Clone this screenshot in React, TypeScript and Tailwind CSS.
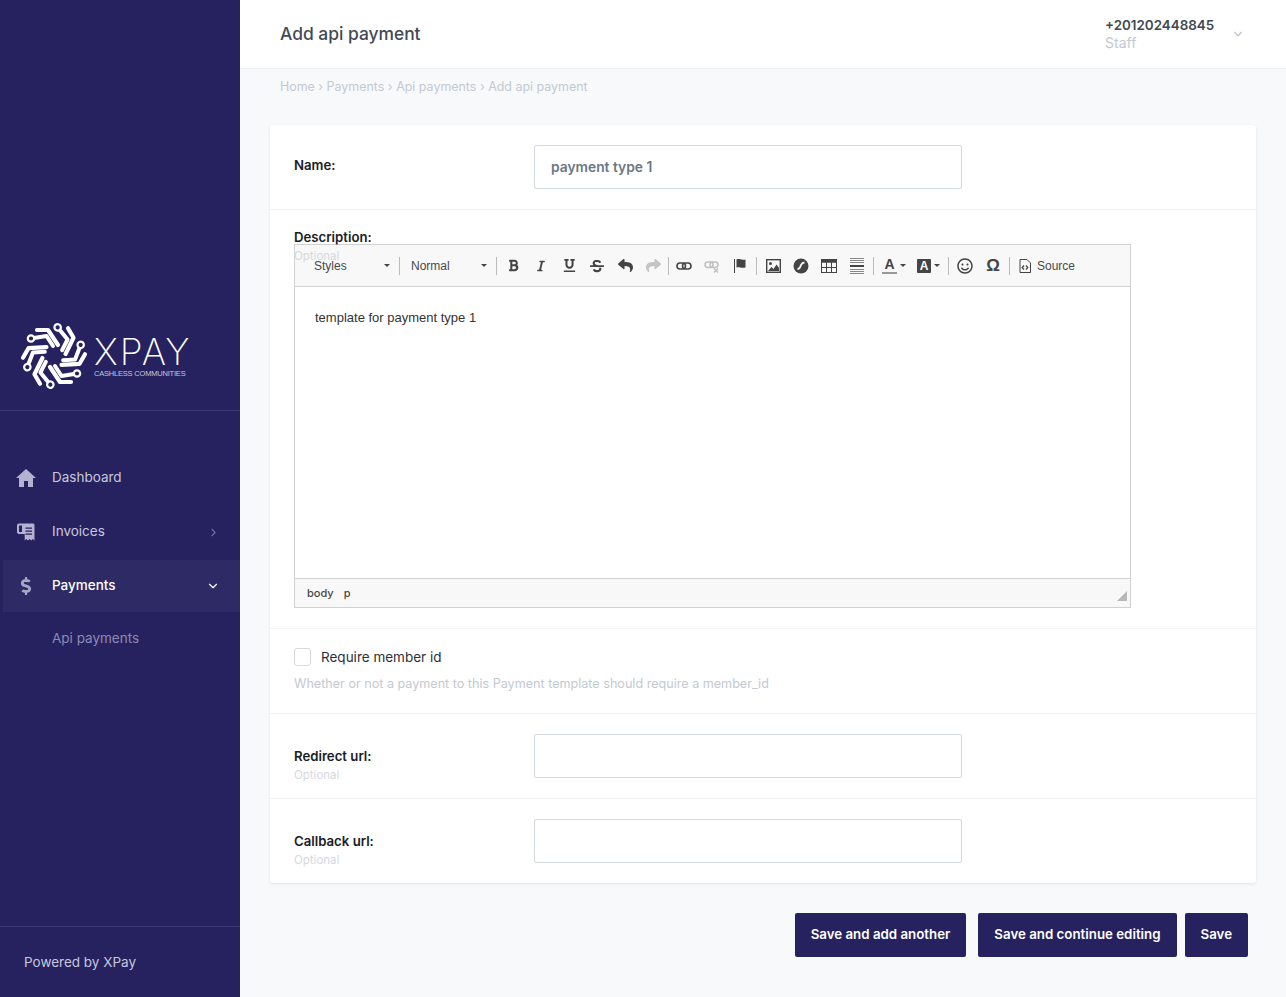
import React, {ReactNode} from "react"
import {
    FaBold,
    FaItalic,
    FaUnderline,
    FaStrikethrough,
    FaReply,
    FaShare,
    FaRegSmile,
    FaDollarSign,
} from "react-icons/fa"
import {ChevronDown, ChevronRight} from "lucide-react"

const APP_FONT = "font-['Inter','Noto_Sans',sans-serif]"

function LogoMark() {
    const arms = [0, 60, 120, 180, 240, 300]
    return (
        <svg width="70" height="70" viewBox="-35 -35 70 70" fill="none" stroke="#ffffff" className="shrink-0">
            {arms.map((angle) => (
                <g key={angle} transform={`rotate(${angle})`}>
                    <path d="M-17 -26 L-6 -26 L4 -11" strokeWidth="4.2" strokeLinecap="round" strokeLinejoin="round"/>
                    <path d="M-20 -18 L-7.500 -20 L-1 -10" strokeWidth="4" strokeLinecap="round" strokeLinejoin="round"/>
                    <circle cx="-23" cy="-17.500" r="3.200" strokeWidth="2.200" fill="#26215f"/>
                </g>
            ))}
        </svg>
    )
}

function HomeIcon() {
    return (
        <svg width="20" height="18" viewBox="0 0 20 18" fill="currentColor">
            <path d="M10 0L20 9h-3v9h-5v-6H8v6H3V9H0z"/>
        </svg>
    )
}

function InvoiceIcon() {
    return (
        <svg width="20" height="20" viewBox="0 0 20 20" fill="currentColor">
            <path d="M1 3.500C1 2.400 1.900 1.500 3 1.500h14c.9 0 1.500.7 1.500 1.500v15.500l-1.700-1.400-1.600 1.400-1.600-1.400-1.600 1.400-1.600-1.400-1.700 1.400V12H3c-1.100 0-2-.9-2-2V3.500zm2 0V10h3V3.500H3zm6.500 2v1.300h6.500V5.500H9.500zm0 3v1.300h6.500V8.500H9.500zm0 3v1.300h6.500v-1.300H9.500z" fillRule="evenodd"/>
        </svg>
    )
}

interface NavItemProps {
    icon: ReactNode
    label: string
    chevron?: "right" | "down"
    active?: boolean
}

function NavItem({icon, label, chevron, active}: NavItemProps) {
    return (
        <div className={`flex h-[52px] items-center ml-[3px] pl-[13px] pr-[20px] ${active ? "bg-[#2e2a66] text-white" : "text-[#c9c7de]"}`}>
            <div className={`flex w-5 justify-center ${active ? "text-[#a8a6c6]" : "text-[#b4b2d0]"}`}>{icon}</div>
            <span className={`mb-[2px] ml-4 flex-1 text-[13.5px] ${active ? "font-medium" : ""}`}>{label}</span>
            {chevron === "right" && <ChevronRight size={13} className="text-[#6f6c9c]"/>}
            {chevron === "down" && <ChevronDown size={14} className="text-white"/>}
        </div>
    )
}

function Sidebar() {
    return (
        <aside className="flex min-h-[997px] w-[240px] shrink-0 flex-col bg-[#26215f]">
            <div className="flex h-[411px] items-end border-b border-[#3d3973] pb-[19px] pl-[19px]">
                <LogoMark/>
                <div className="mb-[13px] ml-[5px] text-white">
                    <div className="font-['Inter',sans-serif] text-[37px] font-extralight leading-[32px] tracking-[2px]">XPAY</div>
                    <div className="mt-[1px] font-['Liberation_Sans',sans-serif] text-[7.5px] leading-[9px] tracking-[-0.2px] text-[#c9c7de]">CASHLESS COMMUNITIES</div>
                </div>
            </div>
            <nav className="flex-1 pt-[41px]">
                <NavItem icon={<HomeIcon/>} label="Dashboard"/>
                <div className="h-[2px]"/>
                <NavItem icon={<InvoiceIcon/>} label="Invoices" chevron="right"/>
                <div className="h-[2px]"/>
                <NavItem icon={<FaDollarSign size={18}/>} label="Payments" chevron="down" active/>
                <div className="pl-[52px] pt-[16px] text-[13.5px] text-[#8d8ab4]">Api payments</div>
            </nav>
            <div className="flex h-[71px] items-center border-t border-[#3d3973] pl-[24px] text-[13.5px] text-[#c9c7de]">
                Powered by XPay
            </div>
        </aside>
    )
}

function TopBar() {
    return (
        <header className="flex h-[69px] items-center justify-between border-b border-[#eff1f5] bg-white pl-[40px] pr-[41px]">
            <h1 className="text-[17.4px] font-medium text-[#3f4a54]">Add api payment</h1>
            <div className="flex items-center">
                <div className="w-[126px]">
                    <div className="text-[13.4px] font-semibold leading-[18px] text-[#3f4a54]">+201202448845</div>
                    <div className="text-[14px] leading-[18px] text-[#c3c9d2]">Staff</div>
                </div>
                <ChevronDown size={14} className="text-[#bcc3cd]"/>
            </div>
        </header>
    )
}

function Sep() {
    return <div className="mx-[2px] h-[18px] w-px bg-[#bcbcbc]"/>
}

function Tool({children}: {children: ReactNode}) {
    return <div className="flex h-7 w-7 items-center justify-center text-[#444444]">{children}</div>
}

function Caret() {
    return <div className="h-0 w-0 border-x-[3px] border-t-[3px] border-x-transparent border-t-[#444444]"/>
}

function EditorToolbar() {
    return (
        <div className="flex h-[42px] items-center border-b border-[#d1d1d1] bg-[#f8f8f8] pl-[19px] font-['Liberation_Sans',sans-serif] text-[12px] text-[#484848]">
            <div className="flex w-[77px] items-center justify-between pr-[1px]">
                <span>Styles</span>
                <Caret/>
            </div>
            <div className="ml-[8px] mr-[11px] h-[18px] w-px bg-[#bcbcbc]"/>
            <div className="flex w-[77px] items-center justify-between pr-[1px]">
                <span>Normal</span>
                <Caret/>
            </div>
            <div className="ml-[8px] mr-[2px] h-[18px] w-px bg-[#bcbcbc]"/>
            <Tool><FaBold size={13}/></Tool>
            <Tool><FaItalic size={12}/></Tool>
            <Tool><FaUnderline size={13}/></Tool>
            <Tool><FaStrikethrough size={14}/></Tool>
            <Tool><FaReply size={15}/></Tool>
            <Tool><FaShare size={15} className="text-[#c4c4c4]"/></Tool>
            <div className="ml-[1px] mr-[1px] h-[18px] w-px bg-[#bcbcbc]"/>
            <Tool>
                <svg width="16" height="16" viewBox="0 0 16 16" fill="none" stroke="currentColor" strokeWidth="1.600">
                    <rect x="1" y="5" width="8.500" height="6" rx="3"/>
                    <rect x="6.500" y="5" width="8.500" height="6" rx="3"/>
                </svg>
            </Tool>
            <Tool>
                <svg width="16" height="16" viewBox="0 0 16 16" fill="none" stroke="#c0c0c0" strokeWidth="1.500">
                    <rect x="1" y="4" width="8" height="5.500" rx="2.700"/>
                    <rect x="6" y="4" width="8" height="5.500" rx="2.700"/>
                    <path d="M10 10.500l4 4m0-4l-4 4"/>
                </svg>
            </Tool>
            <Tool>
                <svg width="16" height="16" viewBox="0 0 16 16" fill="currentColor">
                    <path d="M2 1h1v14H2z"/>
                    <path d="M4.500 1.500c3-1.200 4 .8 9 0v8c-5 1-6-1-9 0z"/>
                </svg>
            </Tool>
            <Sep/>
            <Tool>
                <svg width="15" height="14" viewBox="0 0 15 14">
                    <rect x=".7" y=".7" width="13.600" height="12.600" fill="none" stroke="currentColor" strokeWidth="1.400"/>
                    <circle cx="4.500" cy="4.500" r="1.500" fill="currentColor"/>
                    <path d="M2 12l3.500-4 2 2 3-4.500L13 9v3z" fill="currentColor"/>
                </svg>
            </Tool>
            <Tool>
                <svg width="16" height="16" viewBox="0 0 16 16">
                    <circle cx="8" cy="8" r="7.500" fill="currentColor"/>
                    <path d="M4.500 11c3 0 2.500-2 3.500-4s2-2.500 3.500-2.500" fill="none" stroke="#f8f8f8" strokeWidth="1.800"/>
                </svg>
            </Tool>
            <Tool>
                <svg width="16" height="14" viewBox="0 0 16 14" fill="none" stroke="currentColor">
                    <rect x=".5" y=".5" width="15" height="13"/>
                    <path d="M.5 1.500h15M.5 3h15" strokeWidth="1.500"/>
                    <path d="M.5 8.500h15M5.500 3v10M10.500 3v10"/>
                </svg>
            </Tool>
            <Tool>
                <svg width="14" height="16" viewBox="0 0 14 16" fill="none" stroke="currentColor">
                    <path d="M0 .5h14M0 2.500h14M0 4.500h14M0 11.500h14M0 13.500h14M0 15.500h14" stroke="#888888"/>
                    <path d="M0 8h14" strokeWidth="2"/>
                </svg>
            </Tool>
            <Sep/>
            <div className="flex w-[35px] items-center justify-center gap-[3px] pl-[1px]">
                <div className="flex flex-col items-center">
                    <span className="text-[14px] font-bold leading-[13px] text-[#444444]">A</span>
                    <div className="mt-px h-[2px] w-[15px] bg-[#999999]"/>
                </div>
                <Caret/>
            </div>
            <div className="flex w-[35px] items-center justify-center gap-[3px]">
                <div className="flex h-[14px] w-[14px] items-center justify-center rounded-[1px] bg-[#444444] text-[12px] font-bold text-white">A</div>
                <Caret/>
            </div>
            <div className="ml-[2px] mr-[2px] h-[18px] w-px bg-[#bcbcbc]"/>
            <Tool><FaRegSmile size={16}/></Tool>
            <Tool><span className="text-[17px] font-bold">Ω</span></Tool>
            <div className="ml-[2px] mr-[2px] h-[18px] w-px bg-[#bcbcbc]"/>
            <div className="ml-[7px] flex items-center gap-[6px]">
                <svg width="12" height="14" viewBox="0 0 12 14" fill="none" stroke="#444444">
                    <path d="M1 .5h7l3.500 3.500v9.500H1z"/>
                    <path d="M5 6.500L3.200 8.500 5 10.500M7 6.500l1.800 2L7 10.500" strokeWidth="1.200"/>
                </svg>
                <span>Source</span>
            </div>
        </div>
    )
}

function RichEditor() {
    return (
        <div className="w-[837px] border border-[#d1d1d1]">
            <EditorToolbar/>
            <div className="h-[291px] bg-white px-[20px] pt-[20px] font-['Liberation_Sans',sans-serif] text-[13px] leading-[22px] text-[#333333]">
                template for payment type 1
            </div>
            <div className="relative flex h-[29px] items-center border-t border-[#d1d1d1] bg-[#f8f8f8] pl-[12px] text-[11px] font-medium text-[#484848]">
                <span>body</span>
                <span className="ml-[10px]">p</span>
                <div className="absolute bottom-[6px] right-[3px] h-0 w-0 border-b-[10px] border-l-[10px] border-b-[#b8b8b8] border-l-transparent"/>
            </div>
        </div>
    )
}

function TextRow({label, value, optional}: {label: string; value?: string; optional?: boolean}) {
    return (
        <div className="flex h-[85px] border-b border-[#f1f3f6] px-[24px] pt-[20px] last:h-[84px] last:border-b-0">
            <div className={`w-[240px] ${optional ? "pt-[12px]" : "pt-[10px]"}`}>
                <div className="text-[13.2px] font-semibold leading-[20px] text-[#1a2026]">{label}</div>
                {optional && <div className="text-[11.5px] leading-[18px] text-[#d5d9df]">Optional</div>}
            </div>
            <div className="flex h-[44px] w-[428px] items-center rounded-[2px] border border-[#d5d9e0] px-[16px] text-[13.8px] font-semibold text-[#6b7785]">
                {value}
            </div>
        </div>
    )
}

function FormCard() {
    return (
        <div className="mx-[30px] mt-[29px] rounded-[3px] bg-white shadow-[0_1px_3px_rgba(40,50,70,0.1)]">
            <TextRow label="Name:" value="payment type 1"/>
            <div className="relative h-[419px] border-b border-[#f1f3f6] px-[24px] pt-[20px]">
                <div className="text-[13.2px] font-semibold leading-[14px] text-[#1a2026]">Description:</div>
                <div className="absolute left-[24px] top-[39px] text-[11.5px] leading-[14px] text-[#d5d9df]">Optional</div>
                <RichEditor/>
            </div>
            <div className="h-[85px] border-b border-[#f1f3f6] px-[24px] pt-[18px]">
                <div className="flex items-center gap-[10px]">
                    <div className="h-[18px] w-[17px] rounded-[3px] border border-[#d5d9e0]"/>
                    <span className="text-[13.5px] text-[#2b3138]">Require member id</span>
                </div>
                <div className="mt-[8px] text-[12.6px] text-[#c3c9d2]">Whether or not a payment to this Payment template should require a member_id</div>
            </div>
            <TextRow label="Redirect url:" optional/>
            <TextRow label="Callback url:" optional/>
        </div>
    )
}

function SubmitButton({label, className}: {label: string; className?: string}) {
    return (
        <button className={`h-[44px] rounded-[2px] bg-[#26215f] px-[16px] text-[13.3px] font-semibold text-white ${className ?? ""}`}>
            {label}
        </button>
    )
}

export default function App() {
    return (
        <div className={`flex min-h-[997px] w-full bg-[#f8f9fb] ${APP_FONT}`}>
            <Sidebar/>
            <main className="min-w-0 flex-1">
                <TopBar/>
                <div className="pl-[40px] pt-[9px] text-[12.45px] leading-[18px] text-[#c3c9d2]">
                    Home › Payments › Api payments › Add api payment
                </div>
                <FormCard/>
                <div className="mt-[30px] flex justify-end gap-2 pr-[38px]">
                    <SubmitButton label="Save and add another" className="mr-1"/>
                    <SubmitButton label="Save and continue editing"/>
                    <SubmitButton label="Save"/>
                </div>
            </main>
        </div>
    )
}
